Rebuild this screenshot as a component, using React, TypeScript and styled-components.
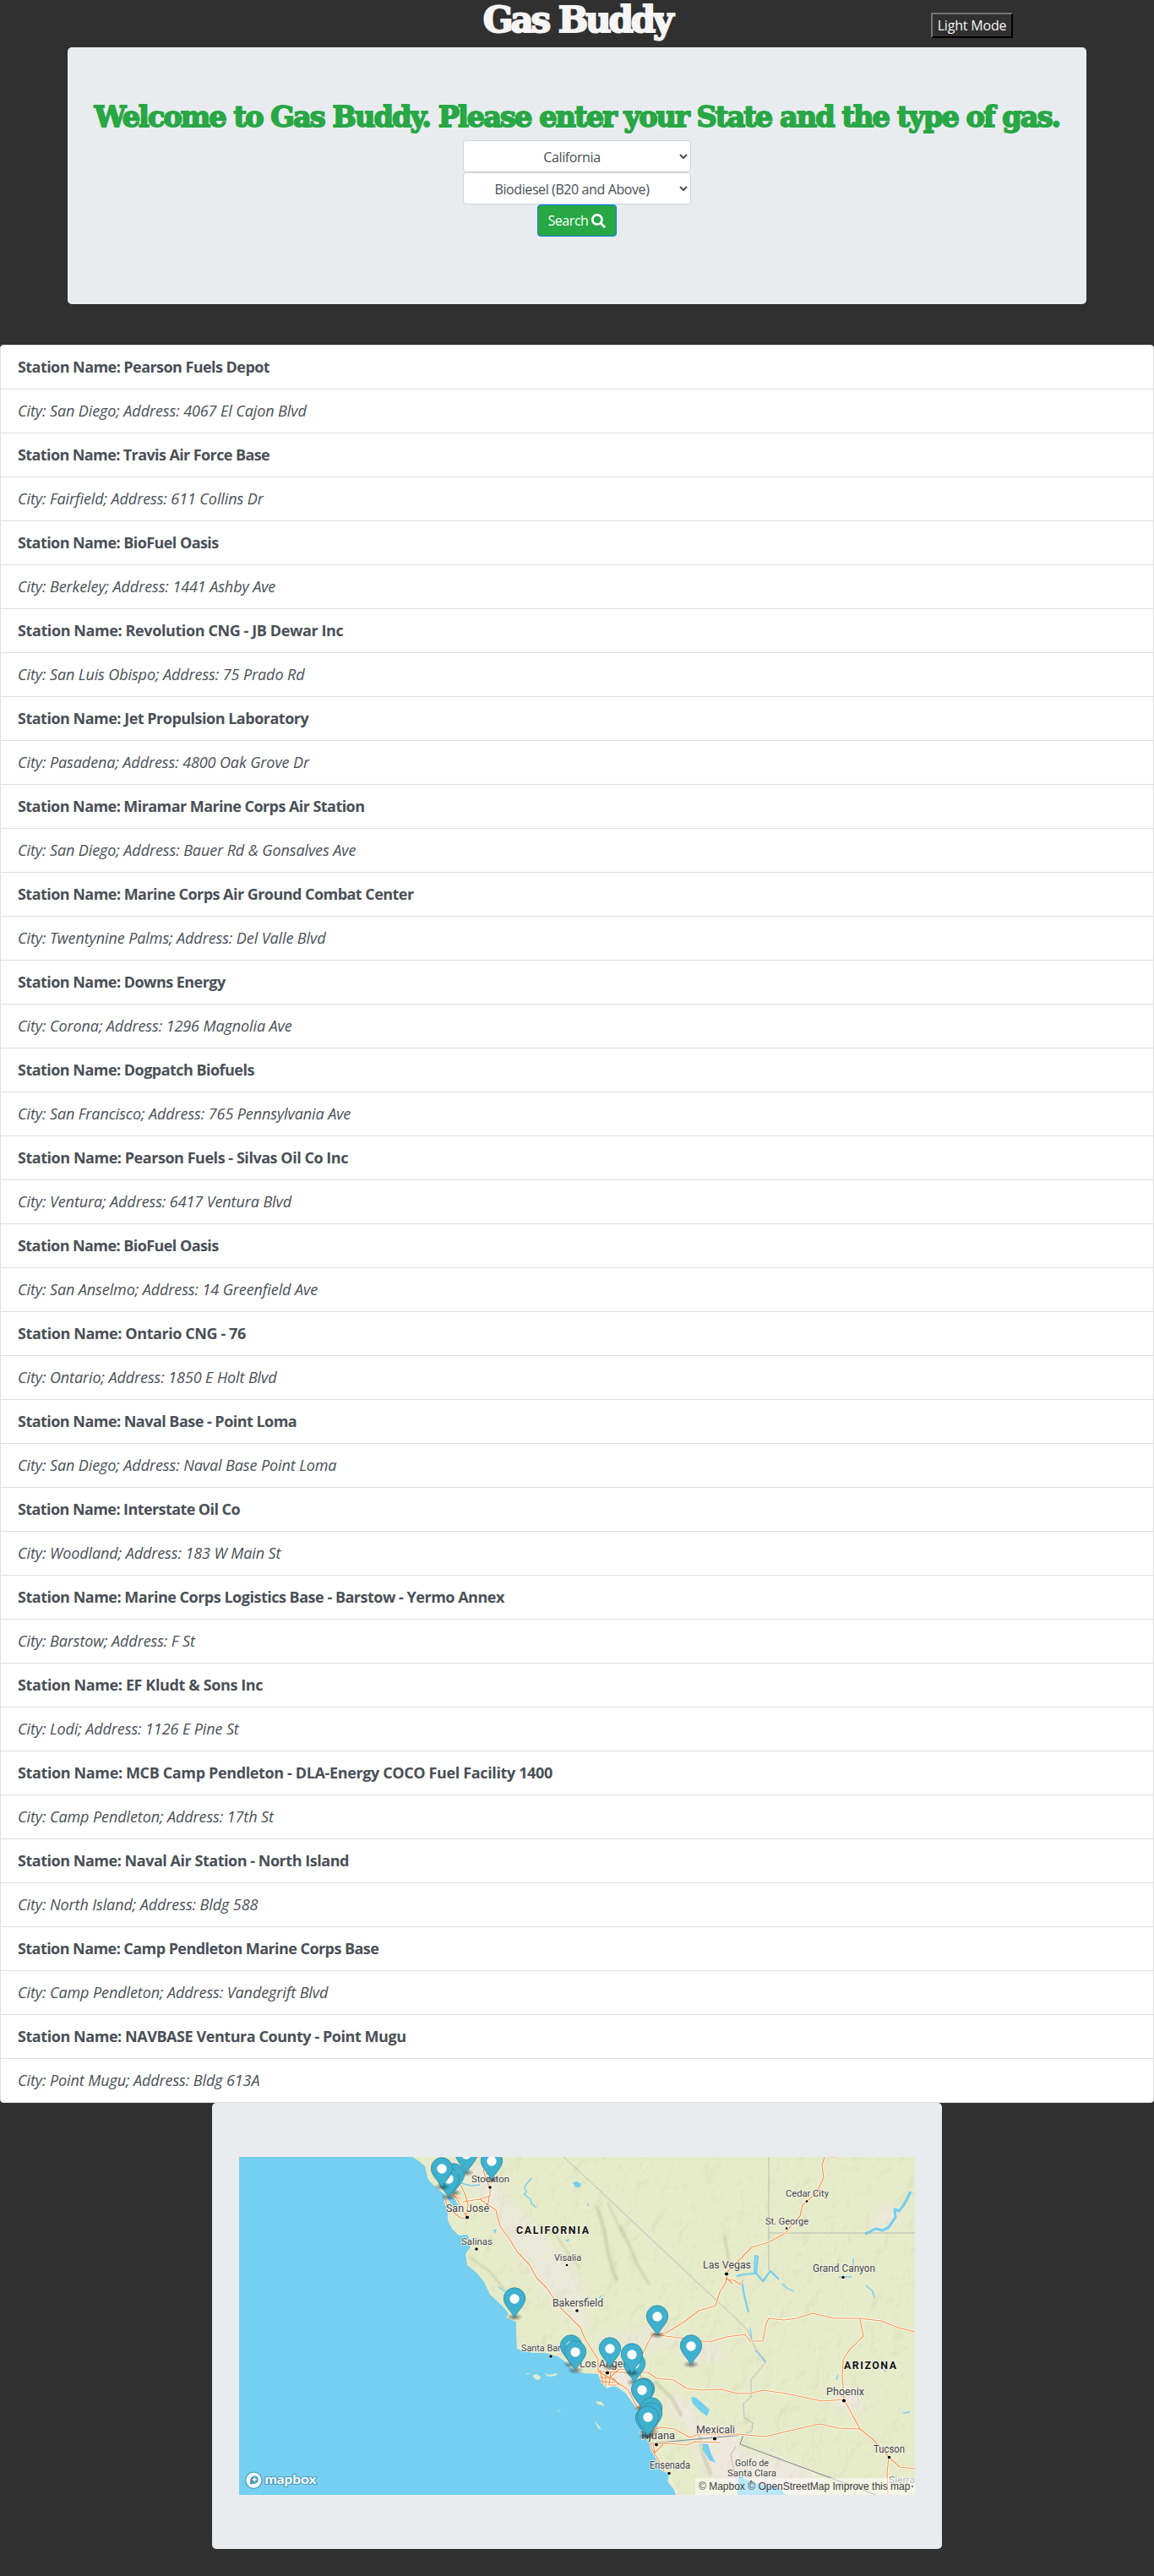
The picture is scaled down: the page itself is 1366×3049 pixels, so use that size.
import React from "react";
import styled, { createGlobalStyle } from "styled-components";
import { FaSearch } from "react-icons/fa";

const GlobalStyle = createGlobalStyle`
  *, *::before, *::after { box-sizing: border-box; }
  body {
    margin: 0;
    background: #303030;
    color: #212529;
    font-family: "Open Sans", "Noto Sans", sans-serif;
    font-size: 16px;
    line-height: 1.5;
  }
`;

const Page = styled.div`
  display: flex;
  flex-direction: column;
  align-items: center;
  padding-bottom: 32px;
`;

const Header = styled.header`
  display: grid;
  grid-template-columns: 1fr auto 1fr;
  width: 100%;
  height: 56px;
`;

const slab = `
  font-family: "DejaVu Serif", serif;
  font-weight: 700;
  white-space: nowrap;
  margin: 0;
`;

const Brand = styled.h1`
  ${slab}
  grid-column: 2;
  font-size: 42px;
  line-height: 48px;
  letter-spacing: -3.1px;
  color: #f5f5f5;
  -webkit-text-stroke: 2px #f5f5f5;
`;

const ModeButton = styled.button`
  justify-self: end;
  margin: 15px 167px 0 0;
  width: 97px;
  height: 30px;
  padding: 0;
  border: 2px outset #767676;
  border-color: #767676 #212121 #212121 #767676;
  background: #303030;
  color: #f5f5f5;
  font: inherit;
  line-height: 26px;
  letter-spacing: -0.2px;
  white-space: nowrap;
`;

const Hero = styled.section`
  width: 1206px;
  height: 304px;
  padding: 64px 32px;
  border-radius: 5px;
  background: #e9ecef;
  display: flex;
  flex-direction: column;
  align-items: center;
`;

const Welcome = styled.h2`
  ${slab}
  font-size: 33.5px;
  line-height: 38px;
  margin-bottom: 8px;
  letter-spacing: -1.9px;
  color: #28a745;
  -webkit-text-stroke: 1.8px #28a745;
`;

const Select = styled.select`
  width: 270px;
  height: 38px;
  padding: 7px 12px 5px;
  border: 1px solid #ced4da;
  border-radius: 4px;
  background: #fff;
  color: #495057;
  font: inherit;
  letter-spacing: -0.4px;
  text-align: center;
  text-align-last: center;
`;

const SearchButton = styled.button`
  display: flex;
  align-items: center;
  justify-content: center;
  gap: 4px;
  width: 94px;
  height: 38px;
  padding: 0;
  border: 1px solid #007bff;
  border-radius: 4px;
  background: #28a745;
  color: #fff;
  font: inherit;
  letter-spacing: -0.45px;
`;

const StationList = styled.ul`
  width: 100%;
  margin: 48px 0 0;
  padding: 0;
  list-style: none;
  border: 1px solid #dfdfdf;
  border-radius: 4px;
  background: #fff;
  overflow: hidden;
`;

const Row = styled.li<{ $kind: "name" | "place"; $tracking?: number }>`
  height: 52px;
  padding: 12px 20px;
  border-bottom: 1px solid #dfdfdf;
  font-size: 18px;
  line-height: 27px;
  white-space: nowrap;
  color: #495057;
  font-weight: ${(p) => (p.$kind === "name" ? 700 : 400)};
  font-style: ${(p) => (p.$kind === "name" ? "normal" : "italic")};
  letter-spacing: ${(p) => p.$tracking ?? -0.1}px;
  &:last-child { height: 51px; border-bottom: 0; }
`;

const MapCard = styled.section`
  width: 864px;
  padding: 64px 32px;
  border-radius: 5px;
  background: #e9ecef;
`;

const MapFrame = styled.div`
  position: relative;
  width: 800px;
  height: 400px;
  overflow: hidden;
`;

const MapDrawing = styled.svg`
  display: block;
  font-family: Roboto, sans-serif;
`;

const Attribution = styled.div`
  position: absolute;
  right: 0;
  bottom: 0;
  width: 260px;
  height: 20px;
  padding: 0 4px;
  background: rgba(255, 255, 255, 0.5);
  color: #404040;
  font: 12px/20px "Liberation Sans", Arial, sans-serif;
  white-space: nowrap;
`;

const stations: [string, string, string, number][] = [
  ["Pearson Fuels Depot", "San Diego", "4067 El Cajon Blvd", -0.56],
  ["Travis Air Force Base", "Fairfield", "611 Collins Dr", -0.6],
  ["BioFuel Oasis", "Berkeley", "1441 Ashby Ave", -0.57],
  ["Revolution CNG - JB Dewar Inc", "San Luis Obispo", "75 Prado Rd", -0.4],
  ["Jet Propulsion Laboratory", "Pasadena", "4800 Oak Grove Dr", -0.5],
  ["Miramar Marine Corps Air Station", "San Diego", "Bauer Rd & Gonsalves Ave", -0.56],
  ["Marine Corps Air Ground Combat Center", "Twentynine Palms", "Del Valle Blvd", -0.54],
  ["Downs Energy", "Corona", "1296 Magnolia Ave", -0.54],
  ["Dogpatch Biofuels", "San Francisco", "765 Pennsylvania Ave", -0.53],
  ["Pearson Fuels - Silvas Oil Co Inc", "Ventura", "6417 Ventura Blvd", -0.46],
  ["BioFuel Oasis", "San Anselmo", "14 Greenfield Ave", -0.57],
  ["Ontario CNG - 76", "Ontario", "1850 E Holt Blvd", -0.42],
  ["Naval Base - Point Loma", "San Diego", "Naval Base Point Loma", -0.53],
  ["Interstate Oil Co", "Woodland", "183 W Main St", -0.58],
  ["Marine Corps Logistics Base - Barstow - Yermo Annex", "Barstow", "F St", -0.49],
  ["EF Kludt & Sons Inc", "Lodi", "1126 E Pine St", -0.38],
  ["MCB Camp Pendleton - DLA-Energy COCO Fuel Facility 1400", "Camp Pendleton", "17th St", -0.37],
  ["Naval Air Station - North Island", "North Island", "Bldg 588", -0.47],
  ["Camp Pendleton Marine Corps Base", "Camp Pendleton", "Vandegrift Blvd", -0.56],
  ["NAVBASE Ventura County - Point Mugu", "Point Mugu", "Bldg 613A", -0.44],
];

const LAND =
  "M205 0 L213 5 220 11 222 20 224 27 234 37 244 45 243 55 247 62 247 75 252 85 260 93 270 92 274 100 273 108 268 115 270 128 282 138 290 148 297 163 307 172 315 180 319 186 316 190 322 193 328 195 328 210 329 227 334 229 347 232 362 232 377 236 387 243 397 254 409 256 425 257 429 267 435 274 444 270 457 279 472 299 484 320 487 340 490 350 499 370 509 376 507 384 515 394 517 400 800 400 800 0Z";

const ISLANDS =
  "M347 259l5-2 5 3 -1 3 -4 1z M361 256l6 2 4-1 6-1 -2 3 -9 1z M422 289l7 1 4 5 -8-2z M421 312l4 5 4 6 -4-2z M376 299l5 2 -3 0z M340 256h4v1h-4z";

const ROADS = [
  "M265 53 L285 50 304 63 309 82 320 97 329 112 344 128 352 143 364 155 379 177 404 202 409 214 415 224 425 240 425 254",
  "M289 15 L291 22 297 38 297 46 285 50 M296 46 L295 56",
  "M244 49 L246 57 254 66 262 72 268 73 M253 44 L259 52 264 62 269 71 M262 33 L268 45 271 57 268 71 M248 45 L257 47 262 50",
  "M274 0 L284 1",
  "M475 257 L475 239 484 220 490 210 504 209 527 195 544 182 564 176 569 160 576 149 577 137 590 124 607 107 627 101 647 90 652 83 664 70 667 57 684 42 692 24 690 10 693 0 M697 0 L707 0",
  "M577 145 L586 146 593 151 597 146 M577 143 L584 150",
  "M490 210 L520 214 557 219 577 213 599 210 605 218 620 218 624 197 627 191 645 193 660 191 679 185 704 191 735 191 760 194 780 202 800 207",
  "M735 192 L739 212 722 229 715 240 714 260 716 287 735 322 750 334 769 355 782 367 800 369 M769 355 L767 374 768 400",
  "M425 254 L457 255 484 255 494 262 514 264 530 274 547 276 570 275 590 280 605 280 620 276 647 280 690 289 716 287",
  "M425 254 L440 262 460 275 468 290 484 320 488 345 497 360 503 372",
  "M475 257 L480 275 485 300 484 320",
  "M485 325 L500 320 515 322 534 332 544 328 590 328 622 331 652 324 687 316 710 321 735 322",
  "M490 340 L507 339 530 341 539 337 570 338 M490 340 L492 350 502 340",
  "M427 252 L431 268 M434 254 L434 272 M440 254 L438 270 447 270 M427 261 L443 262 450 270 M428 266 L445 267 M438 262 L450 251 460 252",
];

const BORDERS =
  "M384 0 L407 21 594 197 602 205 607 218 612 228 624 242 606 264 606 284 597 292 598 309 608 315 607 324 597 329 M627 0 V134 M627 90 H800 M588 343 L582 352 586 372";

const LAKES =
  "M535 284l6 1 16 14 -3 8 -7-5 -10-10z M549 339l6 1 4 12 5 10 -7-3 -8-12z M590 387l2-10 5 3 10 5 33 7 7 8h-57z M246 47l7-1 5 8 3 8 -6-1 -5-7z M395 30l5-1 5 3 -2 4 -5 0z M301 86l4 0 -2 5z M412 164l3 4 -3-1z";

const RIVERS =
  "M262 31L275 34 285 33 M289 20l8 0 7 4 M346 25l-8 10 2 7 -3 2 8 6 1 5 6 5 M307 154l9 6 -1 5 5 1 M218 22l4 9 M272 6l4 4 M387 99l4-1 M412 55l2 3 M426 167l4-3 M755 247l6 3 5 4 M786 303l8-1 M707 264l2-6 M710 142h15 M727 120v12 M742 152l8 7 2 8 M642 150l8 6 7 3 M611 229l5 5 7 9 M605 202l2 15";

const COLORADO =
  "M589 141L597 139 610 138 611 117 614 118 612 138 620 147 629 135 639 145 M595 147l3 17 5 20";

const POWELL =
  "M741 91l5-2 5-3 4-1 6 2 7-3 4-5 5-8 -1-9 5 2 5-6 5-9 4-8";

type Label = { t: string; x: number; y: number; w: number; s: number; faded?: boolean };

const LABELS: Label[] = [
  { t: "Stockton", x: 275, y: 30, w: 45, s: 11.8 },
  { t: "San José", x: 245, y: 65, w: 51, s: 13.2 },
  { t: "Salinas", x: 263, y: 104, w: 37, s: 11.8 },
  { t: "Visalia", x: 373, y: 123, w: 32, s: 11.8 },
  { t: "Bakersfield", x: 371, y: 177, w: 60, s: 12.4 },
  { t: "Cedar City", x: 647, y: 47, w: 51, s: 11.8 },
  { t: "St. George", x: 623, y: 80, w: 51, s: 11.8 },
  { t: "Las Vegas", x: 549, y: 132, w: 57, s: 13.2 },
  { t: "Grand Canyon", x: 679, y: 136, w: 74, s: 12 },
  { t: "Phoenix", x: 695, y: 282, w: 45, s: 13.2 },
  { t: "Mexicali", x: 541, y: 327, w: 46, s: 13.2 },
  { t: "Tucson", x: 751, y: 350, w: 37, s: 12.4 },
  { t: "Tijuana", x: 474, y: 334, w: 42, s: 12.8 },
  { t: "Ensenada", x: 486, y: 369, w: 48, s: 12 },
  { t: "Golfo de", x: 587, y: 366, w: 40, s: 11.8 },
  { t: "Santa Clara", x: 578, y: 378, w: 58, s: 11.8 },
  { t: "Los Angeles", x: 403, y: 249, w: 67, s: 13.2 },
  { t: "Santa Barbara", x: 334, y: 230, w: 68, s: 11.8 },
  { t: "Sierra", x: 769, y: 386, w: 31, s: 11.8, faded: true },
];

const DOTS: [number, number, number][] = [
  [297, 36, 1.8], [270, 71.5, 2.1], [281, 109, 1.8], [388, 128, 1.3], [400, 182, 1.8],
  [672, 52.5, 1.3], [648, 84.5, 1.3], [577, 138.5, 2.1], [715, 142.5, 1.8], [716, 288.5, 2.1],
  [563, 333.5, 2.1], [769.5, 355.5, 1.8], [494, 340.5, 2], [509, 374.5, 1.8], [436, 255.5, 2.1],
  [369, 236, 1.8], [606, 384, 1.5], [797, 390, 1.2],
];

const PINS: [number, number][] = [
  [269, -3], [299, 5], [254, 21], [248, 26], [240, 14], [326, 168], [495, 189],
  [393, 224], [398, 231], [439, 227], [468, 245], [465, 234], [535, 224],
  [479, 275], [477, 276], [488, 298], [488, 304], [482, 309], [484, 308],
];

const Pin = ({ x, y }: { x: number; y: number }) => (
  <g transform={`translate(${x} ${y})`}>
    <ellipse cx="0" cy="21.5" rx="9.5" ry="4.5" fill="url(#pinShadow)" />
    <path
      d="M0 22 C-3 15 -12.7 8 -12.7 -.5 A12.7 12.7 0 0 1 12.7 -.5 C12.7 8 3 15 0 22Z"
      fill="#3fb1ce"
      stroke="#318da5"
      strokeWidth=".9"
    />
    <circle r="5.7" fill="#fff" />
  </g>
);

const StationMap = () => (
  <MapDrawing width="800" height="400" viewBox="0 0 800 400">
    <defs>
      <clipPath id="land"><path d={LAND} /></clipPath>
      <filter id="soft" x="-20%" y="-20%" width="140%" height="140%">
        <feGaussianBlur stdDeviation="4" />
      </filter>
      <filter id="ridge" x="-10%" y="-10%" width="120%" height="120%">
        <feGaussianBlur stdDeviation="1.2" />
      </filter>
      <filter id="relief" x="0" y="0" width="100%" height="100%" colorInterpolationFilters="sRGB">
        <feTurbulence type="fractalNoise" baseFrequency=".045 .035" numOctaves="3" seed="8" />
        <feDiffuseLighting surfaceScale="4" lightingColor="#ffffff" result="lit">
          <feDistantLight azimuth="225" elevation="60" />
        </feDiffuseLighting>
        <feColorMatrix
          type="matrix"
          values="0 0 0 0 .68  0 0 0 0 .7  0 0 0 0 .5  -2.6 0 0 0 2.15"
        />
      </filter>
      <radialGradient id="pinShadow">
        <stop offset="0" stopColor="#000" stopOpacity=".5" />
        <stop offset="1" stopColor="#000" stopOpacity="0" />
      </radialGradient>
    </defs>

    <rect width="800" height="400" fill="#75cff0" />
    <path d={LAND} fill="#e6ebca" />
    <g clipPath="url(#land)">
      <g filter="url(#soft)">
        <path
          d="M268 8 L292 10 325 58 350 80 375 108 402 140 408 175 416 198 400 205 372 176 345 138 318 100 296 58 272 35Z"
          fill="#ebe9d9"
        />
        <path d="M420 215 L470 205 500 190 520 215 470 238 430 228Z" fill="#e9e8d5" />
        <path d="M505 278 L528 288 548 318 590 318 590 345 540 340 530 320 510 300Z" fill="#efe8df" />
        <path d="M535 345 L585 345 660 365 690 385 680 400 600 395 560 380Z" fill="#efe8e0" />
        <path d="M520 225 L565 215 575 240 530 245Z" fill="#ece9d9" />
        <path d="M425 250 L465 252 470 270 480 295 470 295 450 272 430 270Z" fill="#eee9df" />
        <path d="M705 275 L735 275 740 300 712 300Z" fill="#eee8de" />
        <path d="M760 60 L785 55 782 80 745 90Z" fill="#edeadb" />
      </g>
      <rect width="800" height="400" filter="url(#relief)" opacity=".2" />
      <g fill="none" stroke="#c3c79d" strokeLinecap="round" opacity=".6" filter="url(#ridge)">
        <path d="M424 60 L432 85 436 110 441 130 447 145" strokeWidth="4" />
        <path d="M452 82 L462 105 470 125 485 150" strokeWidth="3" />
        <path d="M437 55 L446 75 455 95" strokeWidth="2" />
        <path d="M545 330 L549 352 558 375" strokeWidth="4" />
        <path d="M494 268 L512 285 523 305" strokeWidth="4" />
        <path d="M355 80 L375 92 390 115 402 130" strokeWidth="2" />
        <path d="M575 95 L580 125" strokeWidth="3" />
        <path d="M272 118 L296 135 315 158" strokeWidth="2.5" />
      </g>
    </g>
    <path d={ISLANDS} fill="#e6ebca" />

    <path d={LAKES} fill="#75cff0" />
    <g fill="none" stroke="#75cff0" strokeLinejoin="round">
      <path d={RIVERS} strokeWidth="1.3" />
      <path d={COLORADO} strokeWidth="2.2" />
      <path d={POWELL} strokeWidth="3.2" />
    </g>
    <path d="M585 334 L593 341 M626 347 L650 360 681 375 681 390 692 400 M509 378 L514 388 518 400" fill="none" stroke="#f6f4ea" />

    <path d={BORDERS} fill="none" stroke="#b3b5b5" strokeWidth=".9" />
    <path d="M487 339 L597 329 593 340 754 400" fill="none" stroke="#898b94" strokeWidth="1.1" />

    {ROADS.map((d) => (
      <path key={d} d={d} fill="none" stroke="#fffaf0" strokeWidth="2.8" strokeLinejoin="round" />
    ))}
    {ROADS.map((d) => (
      <path key={d} d={d} fill="none" stroke="#f3944b" strokeWidth="1.2" strokeLinejoin="round" />
    ))}

    {DOTS.map(([x, y, r]) => (
      <circle
        key={`${x}-${y}`}
        cx={x}
        cy={y}
        r={r}
        fill="#000"
        stroke="#fff"
        strokeOpacity=".8"
        strokeWidth="1.2"
        paintOrder="stroke"
      />
    ))}

    <g paintOrder="stroke" strokeLinejoin="round">
      {LABELS.map((l) => (
        <text
          key={l.t}
          x={l.x}
          y={l.y}
          fontSize={l.s}
          textLength={l.w}
          lengthAdjust="spacingAndGlyphs"
          fill="#44454b"
          fillOpacity={l.faded ? 0.75 : 1}
          stroke="#f5f4e6"
          strokeOpacity=".85"
          strokeWidth="2"
        >
          {l.t}
        </text>
      ))}
      <g fontWeight="700" fontSize="12.4" fill="#111" stroke="#f5f4e6" strokeOpacity=".85" strokeWidth="2">
        <text x="328" y="91" textLength="86">CALIFORNIA</text>
        <text x="716" y="251" textLength="62">ARIZONA</text>
      </g>
    </g>

    {PINS.map(([x, y]) => (
      <Pin key={`${x}-${y}`} x={x} y={y} />
    ))}

    <g>
      <circle cx="17.3" cy="382.7" r="9.7" fill="#f4fbfe" stroke="#4f9bb8" strokeWidth="1.2" />
      <path d="M13.2 387 C12.4 381 14.5 377.4 18.3 377.4 A4.6 4.6 0 0 1 22.7 382 C22.7 386 18.5 387.8 13.2 387Z" fill="#4f9bb8" />
      <path d="M18.3 379.3 l.8 1.8 1.8 .8 -1.8 .8 -.8 1.8 -.8 -1.8 -1.8 -.8 1.8 -.8z" fill="#fff" stroke="#fff" strokeWidth=".5" />
      <text
        x="30.5"
        y="387"
        textLength="61"
        lengthAdjust="spacingAndGlyphs"
        fontFamily="Lato, sans-serif"
        fontWeight="700"
        fontSize="16"
        fill="#fff"
        stroke="#4f9bb8"
        strokeWidth="2.2"
        paintOrder="stroke"
        strokeLinejoin="round"
      >
        mapbox
      </text>
    </g>
  </MapDrawing>
);

export default function App() {
  return (
    <>
      <GlobalStyle />
      <Page>
        <Header>
          <Brand>Gas Buddy</Brand>
          <ModeButton type="button">Light Mode</ModeButton>
        </Header>
        <Hero>
          <Welcome>Welcome to Gas Buddy. Please enter your State and the type of gas.</Welcome>
          <Select defaultValue="California">
            <option>California</option>
          </Select>
          <Select defaultValue="Biodiesel (B20 and Above)">
            <option>Biodiesel (B20 and Above)</option>
          </Select>
          <SearchButton type="button">
            Search <FaSearch size={17} />
          </SearchButton>
        </Hero>
        <StationList>
          {stations.map(([name, city, address, tracking], i) => (
            <React.Fragment key={i}>
              <Row $kind="name" $tracking={tracking}>Station Name: {name}</Row>
              <Row $kind="place">City: {city}; Address: {address}</Row>
            </React.Fragment>
          ))}
        </StationList>
        <MapCard>
          <MapFrame>
            <StationMap />
            <Attribution>© Mapbox © OpenStreetMap Improve this map</Attribution>
          </MapFrame>
        </MapCard>
      </Page>
    </>
  );
}
